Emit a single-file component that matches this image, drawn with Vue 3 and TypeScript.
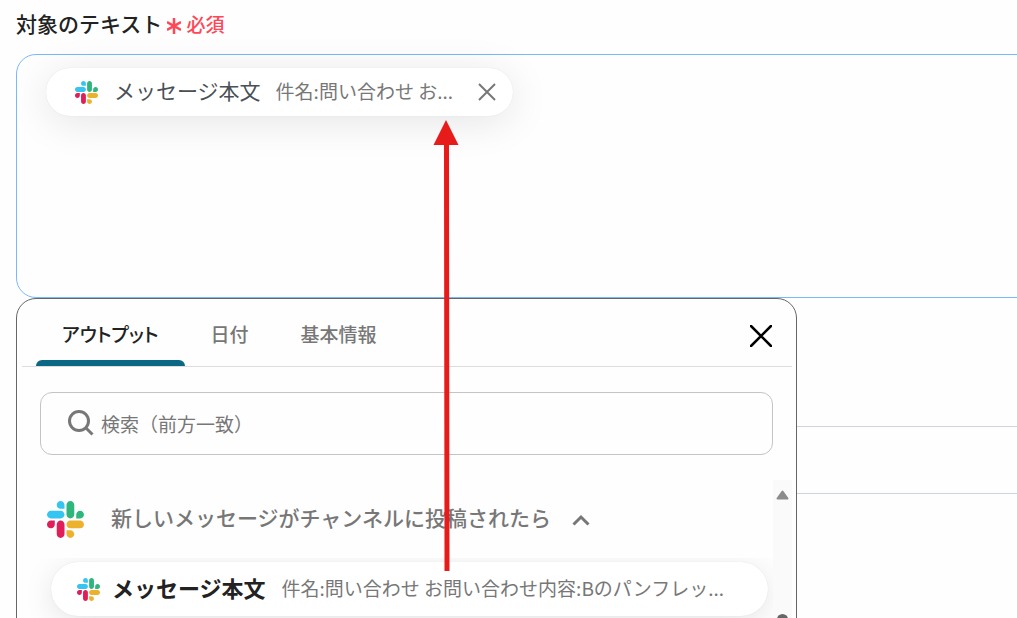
<script setup lang="ts">
import { ref } from 'vue'
import type { FunctionalComponent } from 'vue'
import { h } from 'vue'

interface OutputItem {
  name: string
  sample: string
}

const slackShapes: { fill: string; d: string }[] = [
  { fill: '#e01e5a', d: 'M25.8 77.6c0 7.1-5.8 12.9-12.9 12.9S0 84.7 0 77.6s5.8-12.9 12.9-12.9h12.9v12.9zM32.3 77.6c0-7.1 5.8-12.9 12.9-12.9s12.9 5.8 12.9 12.9v32.3c0 7.1-5.8 12.9-12.9 12.9s-12.9-5.8-12.9-12.9V77.6z' },
  { fill: '#36c5f0', d: 'M45.2 25.8c-7.1 0-12.9-5.8-12.9-12.9S38.1 0 45.2 0s12.9 5.8 12.9 12.9v12.9H45.2zM45.2 32.3c7.1 0 12.9 5.8 12.9 12.9s-5.8 12.9-12.9 12.9H12.9C5.8 58.1 0 52.3 0 45.2s5.8-12.9 12.9-12.9h32.3z' },
  { fill: '#2eb67d', d: 'M97 45.2c0-7.1 5.8-12.9 12.9-12.9s12.9 5.8 12.9 12.9-5.8 12.9-12.9 12.9H97V45.2zM90.5 45.2c0 7.1-5.8 12.9-12.9 12.9s-12.9-5.8-12.9-12.9V12.9C64.7 5.8 70.5 0 77.6 0s12.9 5.8 12.9 12.9v32.3z' },
  { fill: '#ecb22e', d: 'M77.6 97c7.1 0 12.9 5.8 12.9 12.9s-5.8 12.9-12.9 12.9-12.9-5.8-12.9-12.9V97h12.9zM77.6 90.5c-7.1 0-12.9-5.8-12.9-12.9s5.8-12.9 12.9-12.9h32.3c7.1 0 12.9 5.8 12.9 12.9s-5.8 12.9-12.9 12.9H77.6z' },
]

const SlackLogo: FunctionalComponent = () =>
  h(
    'svg',
    { viewBox: '0 0 122.8 122.8', 'aria-hidden': 'true' },
    slackShapes.map((s) => h('path', { fill: s.fill, d: s.d })),
  )

const tabs = ['アウトプット', '日付', '基本情報']
const activeTab = ref(0)
const expanded = ref(true)
const query = ref('')
const items: OutputItem[] = [
  { name: 'メッセージ本文', sample: '件名:問い合わせ お問い合わせ内容:Bのパンフレッ...' },
]
</script>

<template>
  <main class="page">
    <h1 id="field-label" class="label">
      対象のテキスト
      <span class="required">
        <svg viewBox="0 0 14 16" aria-hidden="true">
          <path d="M7 0v16M0 4l14 8M14 4L0 12" />
        </svg>必須
      </span>
    </h1>

    <div class="editor" role="textbox" aria-labelledby="field-label" tabindex="0">
      <div class="chip">
        <SlackLogo class="logo" />
        <span class="chip-name">メッセージ本文</span>
        <span class="sample">件名:問い合わせ お...</span>
        <button class="remove" type="button" aria-label="削除">
          <svg viewBox="0 0 18 18" aria-hidden="true"><path d="M1 1l16 16M17 1L1 17" /></svg>
        </button>
      </div>
    </div>

    <div class="below">
      <div class="row row-first"></div>
      <div class="row"></div>

      <section class="panel">
        <header class="panel-head">
          <div class="tabs" role="tablist">
            <button
              v-for="(tab, i) in tabs"
              :key="tab"
              type="button"
              role="tab"
              class="tab"
              :class="{ active: i === activeTab }"
              :aria-selected="i === activeTab"
              @click="activeTab = i"
            >
              {{ tab }}
            </button>
          </div>
          <button class="close" type="button" aria-label="閉じる">
            <svg viewBox="0 0 22 22" aria-hidden="true"><path d="M1 1l20 20M21 1L1 21" /></svg>
          </button>
        </header>

        <label class="search">
          <svg viewBox="0 0 26 26" aria-hidden="true">
            <circle cx="11" cy="11" r="9.500" />
            <path d="M18 18l6.500 6.500" />
          </svg>
          <input v-model="query" type="text" placeholder="検索（前方一致）" aria-label="検索（前方一致）" />
        </label>

        <div class="results">
          <div class="list">
            <button class="group" type="button" :aria-expanded="expanded" @click="expanded = !expanded">
              <SlackLogo class="logo-large" />
              <span class="group-name">新しいメッセージがチャンネルに投稿されたら</span>
              <svg class="caret" viewBox="0 0 18 12" aria-hidden="true"><path d="M1.500 10.500L9 3l7.500 7.500" /></svg>
            </button>
            <div v-if="expanded" class="items">
              <button v-for="item in items" :key="item.name" type="button" class="item">
                <SlackLogo class="logo" />
                <span class="item-name">{{ item.name }}</span>
                <span class="sample">{{ item.sample }}</span>
              </button>
            </div>
          </div>
          <div class="scrollbar" aria-hidden="true">
            <svg viewBox="0 0 13 10"><path d="M6.5 1.5L11.5 8.5H1.5z" /></svg>
            <div class="thumb"></div>
          </div>
        </div>
      </section>
    </div>

    <svg class="arrow" viewBox="0 0 26 452" aria-hidden="true">
      <path d="M13 0L25.500 25H16L16.500 451H11.500L11 25H.5z" />
    </svg>
  </main>
</template>

<style>
body {
  background: #fefefe;
}
</style>

<style scoped>
.page {
  position: relative;
  box-sizing: border-box;
  height: 100vh;
  overflow: hidden;
  padding-left: 16px;
  background: #fefefe;
  color: #222;
  font-family: "Noto Sans CJK JP", sans-serif;
  font-size: 19px;
}

.page * {
  box-sizing: border-box;
}

button,
input {
  border: 0;
  padding: 0;
  background: none;
  font: inherit;
  color: inherit;
}

button {
  cursor: pointer;
}

svg {
  flex: none;
  display: block;
}

.label {
  display: flex;
  align-items: center;
  gap: 5px;
  height: 54px;
  margin: 0;
  padding-bottom: 8px;
  font-size: 21px;
  font-weight: 500;
}

.required {
  display: flex;
  align-items: center;
  gap: 5px;
  color: #ff4757;
  font-size: 19px;
}

.required svg {
  width: 14px;
  height: 16px;
  margin-top: 6px;
  stroke: currentColor;
  stroke-width: 2.5;
}

.editor {
  height: 244px;
  margin-right: -24px;
  padding: 13px 29px;
  border: 1px solid #7ab8fa;
  border-radius: 20px;
  outline: 0;
}

.chip {
  display: flex;
  align-items: center;
  width: 467px;
  height: 48px;
  padding: 0 16px 0 29px;
  border-radius: 24px;
  background: #fff;
  box-shadow: 0 6px 40px rgba(0, 0, 0, 0.1), 0 0 1px rgba(0, 0, 0, 0.12);
}

.logo {
  width: 23px;
  height: 23px;
}

.chip-name {
  flex: none;
  margin: 0 15px 0 16px;
  padding-bottom: 4px;
  color: #495057;
  font-size: 21px;
}

.sample {
  flex: 1;
  min-width: 0;
  padding-bottom: 4px;
  overflow: hidden;
  text-align: left;
  text-overflow: ellipsis;
  white-space: nowrap;
  color: #777;
}

.remove {
  display: grid;
  place-items: center;
  width: 20px;
  height: 32px;
  margin-left: 16px;
}

.remove svg {
  width: 18px;
  height: 18px;
  stroke: #777;
  stroke-width: 2;
}

.below {
  position: relative;
  height: 400px;
}

.row {
  height: 67px;
  border-bottom: 1px solid #ced4da;
}

.row-first {
  height: 129px;
}

.panel {
  position: absolute;
  inset: 0 220px 0 0;
  border: 1px solid #666;
  border-radius: 20px;
  background: #fefefe;
}

.panel-head {
  display: flex;
  align-items: center;
  justify-content: space-between;
  height: 68px;
  margin: 0 4px 0 5px;
  padding: 0 20px 0 14px;
  border-bottom: 1px solid #ddd;
}

.tabs {
  display: flex;
  align-self: stretch;
}

.tab {
  position: relative;
  padding: 2px 26px 0;
  color: #777;
  font-weight: 500;
  font-feature-settings: "palt";
}

.tab.active {
  color: #222;
}

.tab.active::after {
  content: "";
  position: absolute;
  inset: auto 0 0;
  height: 6px;
  border-radius: 6px 6px 0 0;
  background: #0b6884;
}

.close svg {
  width: 22px;
  height: 22px;
  margin-top: 6px;
  stroke: #000;
  stroke-width: 2.5;
  stroke-linecap: round;
}

.search {
  display: flex;
  align-items: center;
  gap: 7px;
  height: 63px;
  margin: 25px 23px;
  padding: 0 27px;
  border: 1px solid #c4c4c4;
  border-radius: 12px;
}

.search svg {
  width: 26px;
  height: 26px;
  margin-bottom: 2px;
  fill: none;
  stroke: #777;
  stroke-width: 3;
}

.search input {
  flex: 1;
  min-width: 0;
  outline: 0;
}

.search input::placeholder {
  color: #777;
  opacity: 1;
}

.results {
  display: flex;
  height: 200px;
  margin-right: 4px;
}

.list {
  flex: 1;
  min-width: 0;
}

.group {
  display: flex;
  align-items: center;
  width: 100%;
  height: 78px;
  padding-left: 30px;
  color: #777;
  font-size: 21px;
  font-weight: 500;
}

.group-name {
  padding-bottom: 4px;
}

.logo-large {
  width: 37px;
  height: 37px;
  margin-right: 27px;
}

.caret {
  width: 18px;
  height: 12px;
  margin: 2px 0 0 21px;
  fill: none;
  stroke: #777;
  stroke-width: 3;
}

.items {
  height: 100px;
  padding: 4px 5px 4px 34px;
  overflow: hidden;
}

.item {
  display: flex;
  align-items: center;
  width: 100%;
  height: 54px;
  padding: 0 32px 0 26px;
  border-radius: 27px;
  background: #fff;
  box-shadow: 0 6px 30px rgba(0, 0, 0, 0.1), 0 0 1px rgba(0, 0, 0, 0.12);
}

.item-name {
  margin: 0 16px 0 12px;
  padding-bottom: 4px;
  font-size: 22px;
  font-weight: 700;
}

.scrollbar {
  display: flex;
  flex-direction: column;
  align-items: center;
  width: 19px;
  padding-top: 10px;
  background: #fafafa;
}

.scrollbar svg {
  width: 13px;
  height: 10px;
  fill: #8b8b8b;
  stroke: #8b8b8b;
  stroke-width: 2;
  stroke-linejoin: round;
}

.thumb {
  width: 11px;
  height: 60px;
  margin-top: 114px;
  border-radius: 6px;
  background: #666;
}

.arrow {
  position: absolute;
  top: 120px;
  left: 433px;
  width: 26px;
  height: 452px;
  fill: #e81b1b;
  pointer-events: none;
}
</style>
